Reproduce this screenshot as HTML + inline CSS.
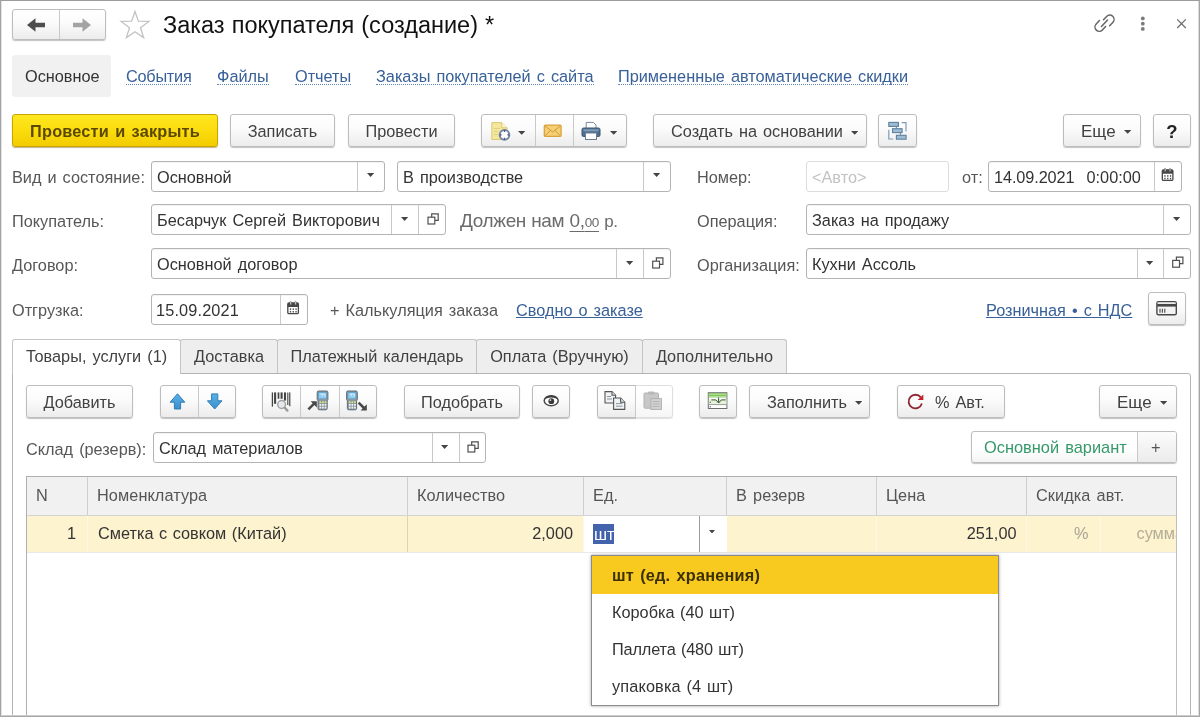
<!DOCTYPE html>
<html lang="ru">
<head>
<meta charset="utf-8">
<title>Заказ покупателя (создание)</title>
<style>
*{box-sizing:border-box;margin:0;padding:0}
html,body{width:1200px;height:717px;overflow:hidden;background:#fff}
body{position:relative;font-family:"Liberation Sans",sans-serif;font-size:16.3px;color:#3c3c3c;letter-spacing:0;word-spacing:1.5px}
.a{position:absolute;white-space:nowrap;will-change:transform}
.frame{left:0;top:0;width:1200px;height:717px;border-top:1px solid #9c9c9c;border-left:1px solid #a4a4a4;border-bottom:1px solid #a6a6a6;border-right:1px solid #a4a4a4;box-shadow:inset 1px 0 0 #e2e2e2,inset -1px 0 0 #dcdcdc,inset 0 -1px 0 #cdcdcd}
.t{line-height:20px;height:20px}
.lbl{color:#575757}
.btn{border:1px solid #bdbdbd;border-radius:3px;background:linear-gradient(#ffffff 0%,#fbfbfb 45%,#ececec 100%);box-shadow:0 1px 1px rgba(0,0,0,.24);text-align:center;color:#414141;line-height:33px;height:33px}
.btn.y{background:linear-gradient(#ffe720 0%,#fbdb0c 55%,#f2cc00 100%);border-color:#c7a500;color:#5a4800;font-weight:bold;box-shadow:0 1px 1px rgba(120,90,0,.45)}
.sep{width:1px;background:#c9c9c9}
.inp{border:1px solid #b4b4b4;border-radius:3px;background:#fff;height:31px;line-height:30px;padding-left:5px;color:#333;box-shadow:inset 0 1px 1px rgba(0,0,0,.05)}
.inp.dis{border-color:#dcdcdc;color:#c2c2c2;box-shadow:none}
.lnk{color:#386099}
.dot{border-bottom:1px dotted #5f86b8;line-height:18px;height:18px}
.sol{text-decoration:underline;text-underline-offset:.5px;text-decoration-thickness:1px}
.caret{width:7.4px;height:3.8px;background:#444;clip-path:polygon(0 0,100% 0,50% 100%)}
.caret.s{width:7.2px;height:4px;margin-top:-.6px;margin-left:-.3px}

.tab{height:34px;line-height:33px;border:1px solid #c4c4c4;border-bottom:none;background:#eeeeee;text-align:center;color:#414141;border-radius:3px 3px 0 0}
.tab.on{background:#fff;height:35px;z-index:3}
.panel{left:12px;top:373px;width:1179px;height:360px;border:1px solid #b4b4b4;border-radius:0 3px 0 0}
.th{top:477px;height:38px;line-height:36px;background:#f1f1f1;border-right:1px solid #cfcfcf;padding-left:9px;color:#555;letter-spacing:.08px}
.td{top:516px;height:36px;line-height:35px;background:#fdf3cf;border-right:1px solid #fef9e6;color:#333;word-spacing:1px}
.mi{left:592px;width:406px;height:37px;line-height:37px;padding-left:20px;color:#333;word-spacing:1px}
svg{position:absolute;overflow:visible}
</style>
</head>
<body>

<!-- ===== title row ===== -->
<div class="a btn" style="left:12px;top:9px;width:94px;height:31px"></div>
<div class="a sep" style="left:59px;top:10px;height:29px"></div>
<div class="a t" style="left:163px;top:11.5px;font-size:23.5px;line-height:26px;height:26px;color:#111;letter-spacing:0;word-spacing:.5px">Заказ покупателя (создание) *</div>

<!-- ===== nav row ===== -->
<div class="a" style="left:12px;top:55px;width:99px;height:42px;background:#f1f1f1;border-radius:3px"></div>
<div class="a t" style="left:25px;top:66px;color:#333">Основное</div>
<div class="a lnk dot" style="left:126px;top:67px;letter-spacing:-.25px">События</div>
<div class="a lnk dot" style="left:217px;top:67px">Файлы</div>
<div class="a lnk dot" style="left:295px;top:67px">Отчеты</div>
<div class="a lnk dot" style="left:376px;top:67px">Заказы покупателей с сайта</div>
<div class="a lnk dot" style="left:618px;top:67px">Примененные автоматические скидки</div>

<!-- ===== command bar ===== -->
<div class="a btn y" style="left:12px;top:114px;width:206px;letter-spacing:.2px">Провести и закрыть</div>
<div class="a btn" style="left:230px;top:114px;width:105px">Записать</div>
<div class="a btn" style="left:348px;top:114px;width:107px">Провести</div>
<div class="a btn" style="left:481px;top:114px;width:146px"></div>
<div class="a sep" style="left:535px;top:115px;height:31px"></div>
<div class="a sep" style="left:573px;top:115px;height:31px"></div>
<div class="a caret" style="left:518px;top:131px"></div>
<div class="a caret" style="left:609.7px;top:131px"></div>
<div class="a btn" style="left:653px;top:114px;width:214px;text-align:left;padding-left:17px">Создать на основании</div>
<div class="a caret" style="left:850.5px;top:130.5px"></div>
<div class="a btn" style="left:878px;top:114px;width:39px"></div>
<div class="a btn" style="left:1063px;top:114px;width:78px;text-align:left;padding-left:17px;font-size:17px">Еще</div>
<div class="a caret" style="left:1123.5px;top:130.3px"></div>
<div class="a btn" style="left:1153px;top:114px;width:38px;font-weight:bold;color:#222;font-size:18.5px">?</div>


<!-- ===== form row 1 ===== -->
<div class="a t lbl" style="left:12px;top:166.5px">Вид и состояние:</div>
<div class="a inp" style="left:151px;top:161px;width:234px">Основной</div>
<div class="a sep" style="left:357px;top:162px;height:29px"></div>
<div class="a caret s" style="left:367px;top:174px"></div>
<div class="a inp" style="left:397px;top:161px;width:274px">В производстве</div>
<div class="a sep" style="left:643px;top:162px;height:29px"></div>
<div class="a caret s" style="left:653px;top:174px"></div>
<div class="a t lbl" style="left:697px;top:166.5px">Номер:</div>
<div class="a inp dis" style="left:806px;top:161px;width:143px">&lt;Авто&gt;</div>
<div class="a t lbl" style="left:962px;top:166.5px">от:</div>
<div class="a inp" style="left:988px;top:161px;width:194px;padding-left:5px;word-spacing:0"><span style="letter-spacing:-.1px">14.09.2021</span><span style="position:absolute;left:97.5px;top:0">0:00:00</span></div>
<div class="a sep" style="left:1154px;top:162px;height:29px"></div>

<!-- ===== form row 2 ===== -->
<div class="a t lbl" style="left:12px;top:210.5px">Покупатель:</div>
<div class="a inp" style="left:151px;top:204px;width:295px">Бесарчук Сергей Викторович</div>
<div class="a sep" style="left:391px;top:205px;height:29px"></div>
<div class="a sep" style="left:418px;top:205px;height:29px"></div>
<div class="a caret s" style="left:401px;top:218px"></div>
<div class="a t" style="left:460px;top:210.5px;font-size:19px;color:#6b6b6b;word-spacing:.3px;letter-spacing:-.35px">Должен нам <span style="text-decoration:underline;text-underline-offset:3.5px;text-decoration-thickness:1px">0,<span style="font-size:13.5px">00</span></span> <span style="font-size:17px">р.</span></div>
<div class="a t lbl" style="left:697px;top:210.5px">Операция:</div>
<div class="a inp" style="left:806px;top:204px;width:385px">Заказ на продажу</div>
<div class="a sep" style="left:1163px;top:205px;height:29px"></div>
<div class="a caret s" style="left:1173px;top:218px"></div>

<!-- ===== form row 3 ===== -->
<div class="a t lbl" style="left:12px;top:254.5px">Договор:</div>
<div class="a inp" style="left:151px;top:248px;width:520px">Основной договор</div>
<div class="a sep" style="left:616px;top:249px;height:29px"></div>
<div class="a sep" style="left:643px;top:249px;height:29px"></div>
<div class="a caret s" style="left:626px;top:262px"></div>
<div class="a t lbl" style="left:697px;top:254.5px">Организация:</div>
<div class="a inp" style="left:806px;top:248px;width:385px">Кухни Ассоль</div>
<div class="a sep" style="left:1137px;top:249px;height:29px"></div>
<div class="a sep" style="left:1163px;top:249px;height:29px"></div>
<div class="a caret s" style="left:1146px;top:262px"></div>

<!-- ===== form row 4 ===== -->
<div class="a t lbl" style="left:12px;top:299.5px">Отгрузка:</div>
<div class="a inp" style="left:151px;top:294px;width:157px;padding-left:4px;letter-spacing:.15px">15.09.2021</div>
<div class="a sep" style="left:280px;top:295px;height:29px"></div>
<div class="a t lbl" style="left:330px;top:299.5px">+ Калькуляция заказа</div>
<div class="a t lnk sol" style="left:516px;top:299.5px">Сводно о заказе</div>
<div class="a t lnk sol" style="left:986px;top:299.5px">Розничная • с НДС</div>
<div class="a btn" style="left:1148px;top:292px;width:38px"></div>


<!-- ===== tabs ===== -->
<div class="a panel"></div>
<div class="a tab on" style="left:12px;top:339px;width:169px">Товары, услуги (1)</div>
<div class="a tab" style="left:180px;top:339px;width:98px">Доставка</div>
<div class="a tab" style="left:277px;top:339px;width:200px">Платежный календарь</div>
<div class="a tab" style="left:476px;top:339px;width:167px">Оплата (Вручную)</div>
<div class="a tab" style="left:642px;top:339px;width:145px">Дополнительно</div>

<!-- ===== table toolbar ===== -->
<div class="a btn" style="left:26px;top:385px;width:107px">Добавить</div>
<div class="a btn" style="left:160px;top:385px;width:76px"></div>
<div class="a sep" style="left:198px;top:386px;height:31px"></div>
<div class="a btn" style="left:262px;top:385px;width:115px"></div>
<div class="a sep" style="left:300px;top:386px;height:31px"></div>
<div class="a sep" style="left:339px;top:386px;height:31px"></div>
<div class="a btn" style="left:404px;top:385px;width:116px">Подобрать</div>
<div class="a btn" style="left:532px;top:385px;width:38px"></div>
<div class="a btn" style="left:597px;top:385px;width:76px"></div>
<div class="a sep" style="left:635px;top:386px;height:31px"></div>
<div class="a" style="left:636px;top:384px;width:39px;height:37px;background:rgba(255,255,255,.5);z-index:2"></div>
<div class="a btn" style="left:699px;top:385px;width:38px"></div>
<div class="a btn" style="left:749px;top:385px;width:121px;text-align:left;padding-left:17px">Заполнить</div>
<div class="a caret" style="left:854.5px;top:401.3px"></div>
<div class="a btn" style="left:897px;top:385px;width:108px;text-align:left;padding-left:37px">% Авт.</div>
<div class="a btn" style="left:1099px;top:385px;width:78px;text-align:left;padding-left:17px;font-size:17px">Еще</div>
<div class="a caret" style="left:1160px;top:401.3px"></div>

<!-- ===== warehouse row ===== -->
<div class="a t lbl" style="left:26px;top:438.5px">Склад (резерв):</div>
<div class="a inp" style="left:153px;top:432px;width:333px">Склад материалов</div>
<div class="a sep" style="left:432px;top:433px;height:29px"></div>
<div class="a sep" style="left:459px;top:433px;height:29px"></div>
<div class="a caret s" style="left:441.5px;top:446px"></div>
<div class="a btn" style="left:971px;top:431px;height:32px;line-height:31px;width:206px;text-align:left;padding-left:12px;color:#35996a;font-size:16.4px;word-spacing:1.5px;background:linear-gradient(#fff 0%,#fff 55%,#f4f4f4 100%)">Основной вариант</div>
<div class="a" style="left:1138px;top:432px;width:38px;height:30px;background:linear-gradient(#fcfcfc,#ebebeb);border-radius:0 2px 2px 0"></div>
<div class="a sep" style="left:1137px;top:432px;height:30px"></div>
<div class="a t" style="left:1151px;top:437px;color:#555">+</div>

<!-- ===== table ===== -->
<div class="a" style="left:26px;top:476px;width:1151px;height:250px;border:1px solid #b0b0b0;border-right-color:#bebebe;background:#fff"></div>
<div class="a th" style="left:27px;width:61px">N</div>
<div class="a th" style="left:88px;width:320px">Номенклатура</div>
<div class="a th" style="left:408px;width:176px">Количество</div>
<div class="a th" style="left:584px;width:143px">Ед.</div>
<div class="a th" style="left:727px;width:150px">В резерв</div>
<div class="a th" style="left:877px;width:150px">Цена</div>
<div class="a th" style="left:1027px;width:149px;border-right:none">Скидка авт.</div>
<div class="a" style="left:27px;top:515px;width:1149px;height:1px;background:#d4d4d4"></div>
<div class="a td" style="left:27px;width:61px;text-align:right;padding-right:11px;border-right-color:#fefaea">1</div>
<div class="a td" style="left:88px;width:320px;padding-left:10px;border-right-color:#dcd3b0">Сметка с совком (Китай)</div>
<div class="a td" style="left:408px;width:176px;text-align:right;padding-right:10px">2,000</div>
<div class="a td" style="left:584px;width:143px;background:#fff;border-right:none"></div>
<div class="a" style="left:593px;top:524px;width:21px;height:20px;background:#4463ad"></div>
<div class="a t" style="left:594px;top:524px;color:#fff">шт</div>
<div class="a sep" style="left:699px;top:516px;height:36px;background:#9c9c9c"></div>
<div class="a caret s" style="left:709px;top:531px;width:6px;height:3.4px"></div>
<div class="a td" style="left:727px;width:150px"></div>
<div class="a td" style="left:877px;width:150px;text-align:right;padding-right:9.5px">251,00</div>
<div class="a td" style="left:1027px;width:74px;text-align:right;padding-right:11.5px;color:#a8a494">%</div>
<div class="a td" style="left:1101px;width:75px;border-right:none;padding-left:35.5px;color:#b3ad98;overflow:hidden">сумма</div>
<div class="a" style="left:27px;top:552px;width:1149px;height:1px;background:#e8e8e8"></div>

<!-- ===== dropdown ===== -->
<div class="a" style="left:591px;top:555px;width:408px;height:151px;border:1px solid #8c8c8c;background:#fff;box-shadow:0 0 3px rgba(0,0,0,.38)"></div>
<div class="a mi" style="top:556px;height:38px;line-height:39px;background:#f8ca20;font-weight:bold;color:#3a3000;letter-spacing:.2px;word-spacing:1.5px">шт (ед. хранения)</div>
<div class="a mi" style="top:594px">Коробка (40 шт)</div>
<div class="a mi" style="top:631px;letter-spacing:-.15px">Паллета (480 шт)</div>
<div class="a mi" style="top:668px;letter-spacing:.15px">упаковка (4 шт)</div>


<!-- ===== icons ===== -->
<svg style="left:0;top:0;z-index:10" width="1200" height="717" viewBox="0 0 1200 717">
<defs>
<linearGradient id="gb" x1="0" y1="0" x2="0" y2="1"><stop offset="0" stop-color="#5ab2e8"/><stop offset="1" stop-color="#3a8fcb"/></linearGradient>
</defs>
<!-- nav arrows -->
<path d="M27 25 L35.5 18.3 V22.8 H45 V27.3 H35.5 V31.7 Z" fill="#4d4d4d"/>
<path d="M91 25 L82.5 18.3 V22.8 H73 V27.3 H82.5 V31.7 Z" fill="#a3a3a3"/>
<!-- star -->
<path d="M135 11.5 L138.4 21.2 L148.9 21.4 L140.5 27.7 L143.6 37.6 L135 31.7 L126.4 37.6 L129.5 27.7 L121.1 21.4 L131.6 21.2 Z" fill="#fff" stroke="#c2c2c2" stroke-width="1.3" stroke-linejoin="miter"/>
<!-- link / dots / close -->
<g fill="none" stroke="#666" stroke-width="1.5" stroke-linecap="round">
<path d="M1101.5 26.5 L1107.5 20"/>
<path d="M1103.5 19.8 L1106.6 16.4 a4.3 4.3 0 0 1 6.2 6 L1109.6 25.8"/>
<path d="M1105.6 26.6 L1102.4 30 a4.3 4.3 0 0 1 -6.2 -6 L1099.4 20.6"/>
</g>
<circle cx="1142.8" cy="18.4" r="1.9" fill="#7a7a7a"/><circle cx="1142.8" cy="23.7" r="1.9" fill="#7a7a7a"/><circle cx="1142.8" cy="28.9" r="1.9" fill="#7a7a7a"/>
<path d="M1177.2 19.4 L1185.8 28 M1185.8 19.4 L1177.2 28" stroke="#6a6a6a" stroke-width="1.2" fill="none"/>

<!-- doc+clock -->
<path d="M491.8 122.6 H501.8 L507 127.8 V139.5 H491.8 Z" fill="#f4e79c" stroke="#d9c878" stroke-width="1"/>
<path d="M501.8 122.6 V127.8 H507" fill="#fcf6d2" stroke="#d9c878" stroke-width="1"/>
<path d="M494 128.5 H500 M494 131.5 H498 M494 134.5 H497.5" stroke="#ddcf86" stroke-width="1"/>
<circle cx="504.5" cy="134.9" r="4.8" fill="#fff" stroke="#7284a6" stroke-width="2"/>
<path d="M504.5 130 V132 M504.5 137.8 V139.8 M499.6 134.9 H501.6 M507.4 134.9 H509.4" stroke="#4a5878" stroke-width="1.2" fill="none"/>
<!-- envelope -->
<rect x="544.3" y="125.1" width="16.8" height="11.3" rx="1.2" fill="#f5cf74" stroke="#d9a23e" stroke-width="1.3"/>
<path d="M545 125.9 L552.7 132 L560.4 125.9 M545 135.8 L550.5 130.4 M560.4 135.8 L554.9 130.4" fill="none" stroke="#cf9a3c" stroke-width="1"/>
<!-- printer -->
<path d="M586.2 122.4 H593.4 L596 125 V129 H586.2 Z" fill="#fff" stroke="#7a8b9e" stroke-width="1"/>
<rect x="582" y="128" width="18" height="8.5" rx="1.5" fill="#4f6f8f" stroke="#3c566f" stroke-width="1"/>
<rect x="583.5" y="129.3" width="15" height="2" fill="#7f9db8"/>
<rect x="585.5" y="133" width="11" height="6.5" fill="#fff" stroke="#6a7f96" stroke-width="1"/>
<!-- structure icon -->
<path d="M901.6 122.7 H906 V131.6 M888.8 129.8 V139 H893.2 M896.4 126.4 V128.6 M900.4 132.6 V135.2" fill="none" stroke="#7f9cb6" stroke-width="1.2"/>
<g fill="#9dbbd4" stroke="#5d819f" stroke-width="1.1">
<rect x="888.8" y="122.4" width="9.6" height="4"/><rect x="892.5" y="128.7" width="9.6" height="3.9"/><rect x="896.4" y="135.3" width="9.7" height="3.9"/>
</g>
<!-- card icon -->
<rect x="1156.9" y="301.7" width="19.4" height="13.1" rx="1.6" fill="#f3f3f3" stroke="#474747" stroke-width="1.4"/>
<rect x="1157.6" y="302.5" width="18" height="1.2" fill="#fff"/>
<rect x="1157.2" y="303.9" width="18.8" height="2.7" fill="#474747"/>
<path d="M1160 308.8 V312.8 M1162.4 308.8 V312.8 M1164.8 308.8 V312.8" stroke="#555" stroke-width="1.2"/>

<!-- up / down arrows -->
<path d="M177.5 393.8 L184.8 402.2 H180.6 V409 H174.4 V402.2 H170.2 Z" fill="url(#gb)" stroke="#2f7db5" stroke-width="1" stroke-linejoin="round"/>
<path d="M214.7 409 L222 400.8 H217.8 V393.9 H211.6 V400.8 H207.4 Z" fill="url(#gb)" stroke="#2f7db5" stroke-width="1" stroke-linejoin="round"/>

<!-- barcode + magnifier -->
<g stroke="#454545">
<path d="M272.4 392.4 V406.6" stroke-width="1.3"/><path d="M275.1 392.4 V403.8" stroke-width="2.1"/><path d="M278.5 392.4 V398.8" stroke-width="1.7"/><path d="M281.6 392.4 V398.8" stroke-width="2.1"/><path d="M285 392.4 V400.6" stroke-width="2.1"/><path d="M287.8 392.4 V405" stroke-width="1.1"/><path d="M289.7 392.4 V406.2" stroke-width="1.5" stroke="#666"/>
</g>
<circle cx="281.6" cy="404.5" r="3.9" fill="#e6e8ea" stroke="#a2a5a8" stroke-width="1.5"/>
<path d="M284.8 407.8 L287.4 410.6" stroke="#989b9e" stroke-width="2.4" stroke-linecap="round"/>
<!-- terminal 1 -->
<g id="term">
<path d="M317.2 392.3 a1.3 1.3 0 0 1 1.3 -1.3 H326.6 a1.3 1.3 0 0 1 1.3 1.3 V399.6 L327.2 400.8 V408.5 a1.3 1.3 0 0 1 -1.3 1.3 H319.3 a1.3 1.3 0 0 1 -1.3 -1.3 V400.8 L317.2 399.6 Z" fill="#8d979f" stroke="#5e6c76" stroke-width="1"/>
<rect x="318.6" y="392.4" width="7.9" height="6.4" fill="#8ecbf0" stroke="#5f9ec8" stroke-width=".7"/>
<path d="M320.6 394 H325 V396.6 M320.6 394 L323 396.4" stroke="#dff1fc" stroke-width=".9" fill="none"/>
<rect x="319.5" y="401.3" width="1.7" height="1.8" fill="#d3e584"/><rect x="322.1" y="401.3" width="1.7" height="1.8" fill="#d3e584"/><rect x="324.7" y="401.3" width="1.7" height="1.8" fill="#d3e584"/><rect x="319.5" y="404" width="1.7" height="1.8" fill="#f2f4f5"/><rect x="322.1" y="404" width="1.7" height="1.8" fill="#f2f4f5"/><rect x="324.7" y="404" width="1.7" height="1.8" fill="#f2f4f5"/><rect x="319.5" y="406.7" width="1.7" height="1.8" fill="#f2f4f5"/><rect x="322.1" y="406.7" width="1.7" height="1.8" fill="#f2f4f5"/><rect x="324.7" y="406.7" width="1.7" height="1.8" fill="#f2f4f5"/>
</g>
<path d="M308.4 409.4 L314.6 403.2" stroke="#484848" stroke-width="2.5" fill="none"/><path d="M310.6 401.2 H316.8 V407.4 Z" fill="#484848"/>
<!-- terminal 2 -->
<use href="#term" x="29.4" y="0"/>
<path d="M358.6 402.6 L364 408" stroke="#484848" stroke-width="2.5" fill="none"/><path d="M366.8 404.2 V410.4 H360.6 Z" fill="#484848"/>

<!-- eye -->
<ellipse cx="551.2" cy="400.7" rx="7" ry="5" fill="#fff" stroke="#4a4a4a" stroke-width="1.5"/>
<path d="M544.2 400.2 C545.4 393.8 557 393.8 558.2 400.2 C556 396.6 546.4 396.6 544.2 400.2 Z" fill="#3e3e3e"/>
<circle cx="551.3" cy="401.2" r="2.9" fill="#3a3a3a"/>
<circle cx="550.4" cy="400.1" r=".9" fill="#e8e8e8"/>

<!-- copy -->
<g fill="#f0f2f4" stroke="#555" stroke-width="1.1">
<path d="M605 391.6 H612 L615.6 395.2 V403 H605 Z"/><path d="M612 391.6 V395.2 H615.6" fill="#e4e4e4"/>
<path d="M613.6 398 H620.6 L624.8 402.2 V409.4 H613.6 Z"/><path d="M620.6 398 V402.2 H624.8" fill="#e4e4e4"/>
</g>
<path d="M607 396.5 H611 M607 399 H612 M616 403.6 H622.5 M616 406.2 H622.5" stroke="#8a94a0" stroke-width="1"/>
<!-- paste (disabled) -->
<rect x="644" y="393" width="14.5" height="15.2" rx="1" fill="#c8c8c8" stroke="#b2b2b2" stroke-width="1"/>
<rect x="648" y="391.4" width="6.5" height="3.2" rx="1" fill="#b8b8b8"/>
<rect x="650.8" y="398.6" width="10.6" height="10.8" fill="#d2d2d2" stroke="#b0b0b0" stroke-width="1"/>
<path d="M652.5 401.5 H659.5 M652.5 404 H659.5 M652.5 406.5 H659.5" stroke="#b4b4b4" stroke-width="1"/>
<!-- green table -->
<rect x="708.3" y="392.7" width="18.6" height="15.8" fill="#fff" stroke="#6e6e6e" stroke-width="1"/>
<rect x="708.8" y="393.2" width="17.6" height="3.3" fill="#7cc455"/>
<path d="M708.8 394.6 H726.4" stroke="#b4e096" stroke-width=".9"/>
<rect x="708.8" y="396.5" width="17.6" height="1.2" fill="#a9d98c"/>
<rect x="708.8" y="399.2" width="17.6" height="4.8" fill="#e3f3d8"/>
<path d="M708.8 404.6 H726.4" stroke="#9a9a9a" stroke-width="1"/>
<path d="M711.4 399.9 H715.8 L718.6 403 L721.4 399.9 H725.6 M718.6 397.5 V403" fill="none" stroke="#3f4f3c" stroke-width="1"/>
<path d="M710.2 401.6 V403 M710.2 406 V407.4" stroke="#556" stroke-width="1"/>

<!-- red refresh -->
<path d="M920.8 397.4 A6.8 6.8 0 1 0 921.9 403.6" fill="none" stroke="#932636" stroke-width="1.8"/>
<path d="M923.3 394.4 V399.9 H917.6 Z" fill="#c3212c"/>

<!-- calendars -->
<rect x="1162.3" y="169.79999999999998" width="10.6" height="10.6" rx="1.2" fill="#fff" stroke="#474747" stroke-width="1.3"/><path d="M1162.3 173.79999999999998 V171.0 a1.2 1.2 0 0 1 1.2 -1.2 H1171.7 a1.2 1.2 0 0 1 1.2 1.2 V173.79999999999998 Z" fill="#474747"/><rect x="1164.5" y="168.2" width="1.3" height="3.4" rx=".6" fill="#fff" stroke="#474747" stroke-width=".5"/><rect x="1169.4" y="168.2" width="1.3" height="3.4" rx=".6" fill="#fff" stroke="#474747" stroke-width=".5"/><rect x="1164.3" y="175.2" width="1.3" height="1.5" fill="#474747"/><rect x="1164.3" y="177.79999999999998" width="1.3" height="1.5" fill="#474747"/><rect x="1167.1" y="175.2" width="1.3" height="1.5" fill="#474747"/><rect x="1167.1" y="177.79999999999998" width="1.3" height="1.5" fill="#474747"/><rect x="1169.8999999999999" y="175.2" width="1.3" height="1.5" fill="#474747"/><rect x="1169.8999999999999" y="177.79999999999998" width="1.3" height="1.5" fill="#474747"/>
<rect x="287.8" y="303.0" width="10.6" height="10.6" rx="1.2" fill="#fff" stroke="#474747" stroke-width="1.3"/><path d="M287.8 307.0 V304.2 a1.2 1.2 0 0 1 1.2 -1.2 H297.2 a1.2 1.2 0 0 1 1.2 1.2 V307.0 Z" fill="#474747"/><rect x="290.0" y="301.4" width="1.3" height="3.4" rx=".6" fill="#fff" stroke="#474747" stroke-width=".5"/><rect x="294.9" y="301.4" width="1.3" height="3.4" rx=".6" fill="#fff" stroke="#474747" stroke-width=".5"/><rect x="289.8" y="308.4" width="1.3" height="1.5" fill="#474747"/><rect x="289.8" y="311.0" width="1.3" height="1.5" fill="#474747"/><rect x="292.6" y="308.4" width="1.3" height="1.5" fill="#474747"/><rect x="292.6" y="311.0" width="1.3" height="1.5" fill="#474747"/><rect x="295.40000000000003" y="308.4" width="1.3" height="1.5" fill="#474747"/><rect x="295.40000000000003" y="311.0" width="1.3" height="1.5" fill="#474747"/>
<!-- open icons -->
<path d="M431.7 217.0V213.9H438.2V220.4H434.9" fill="none" stroke="#505050" stroke-width="1.2"/><rect x="428.0" y="217.2" width="6.8" height="6.8" fill="#fff" stroke="#505050" stroke-width="1.2"/><path d="M656.4 261.0V257.9H662.9V264.4H659.6" fill="none" stroke="#505050" stroke-width="1.2"/><rect x="652.7" y="261.2" width="6.8" height="6.8" fill="#fff" stroke="#505050" stroke-width="1.2"/><path d="M1176.4 260.2V257.1H1182.9V263.6H1179.6" fill="none" stroke="#505050" stroke-width="1.2"/><rect x="1172.7" y="260.4" width="6.8" height="6.8" fill="#fff" stroke="#505050" stroke-width="1.2"/><path d="M471.7 445.0V441.9H478.2V448.4H474.9" fill="none" stroke="#505050" stroke-width="1.2"/><rect x="468.0" y="445.2" width="6.8" height="6.8" fill="#fff" stroke="#505050" stroke-width="1.2"/>
</svg>
<div class="a frame" style="z-index:20;pointer-events:none"></div>
</body>
</html>
